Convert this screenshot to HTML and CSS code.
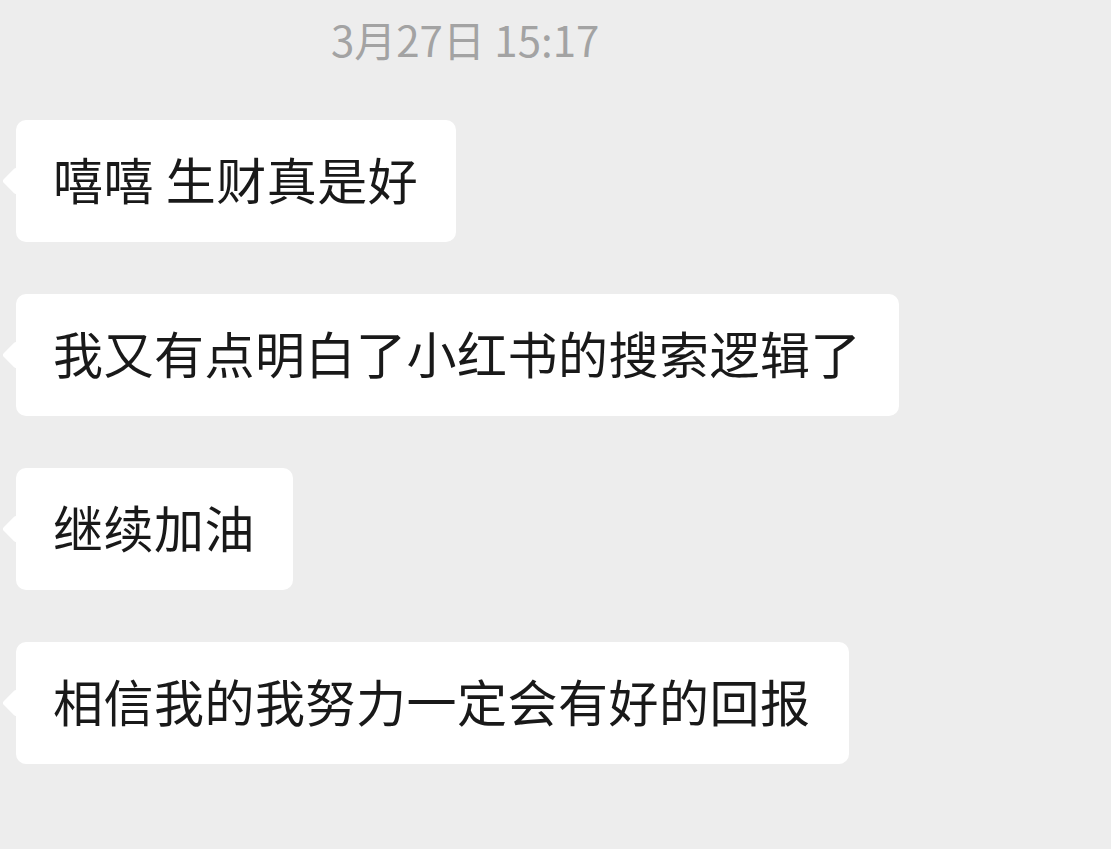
FILE: index.html
```html
<!DOCTYPE html>
<html>
<head>
    <title>聊天记录</title>
    <link rel="stylesheet" href="styles.css">
</head>
<body>
    <div class="time">3月27日 15:17</div>

    <div class="chat">
        <div class="bubble">嘻嘻 生财真是好</div>
        <div class="bubble">我又有点明白了小红书的搜索逻辑了</div>
        <div class="bubble">继续加油</div>
        <div class="bubble">相信我的我努力一定会有好的回报</div>
    </div>
</body>
</html>
```

FILE: styles.css
```css
body {
    margin: 0;
    background-color: #ededed;
    font-family: "Noto Sans CJK SC", "Noto Sans", sans-serif;
    color: #191919;
}

.time {
    height: 80px;
    line-height: 78px;
    padding-left: 331px;
    font-size: 42px;
    color: #a3a3a3;
}

.chat {
    display: flex;
    flex-direction: column;
    align-items: flex-start;
    gap: 52px;
    padding: 40px 0 0 16px;
}

.bubble {
    position: relative;
    background-color: #fff;
    border-radius: 10px;
    height: 116px;
    line-height: 116px;
    padding: 0 38px 6px 37px;
    font-size: 50px;
    letter-spacing: 0.5px;
    white-space: nowrap;
}

/* little tail on the left */
.bubble::before {
    content: "";
    position: absolute;
    left: -10px;
    top: 51px;
    width: 20px;
    height: 20px;
    background-color: #fff;
    border-radius: 3px;
    transform: rotate(45deg);
}
```
